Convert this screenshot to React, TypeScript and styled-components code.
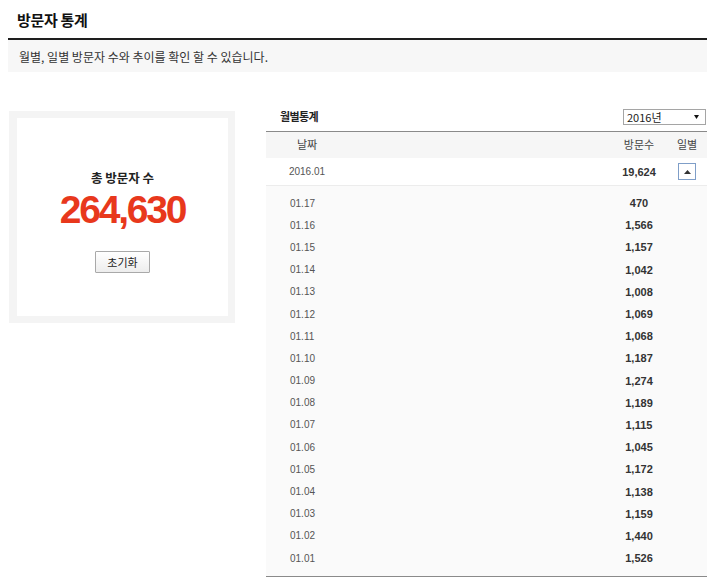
import React from "react";
import styled, { createGlobalStyle } from "styled-components";

const GlobalStyle = createGlobalStyle`
  html, body { margin: 0; padding: 0; background: #fff; }
  body { font-family: "Noto Sans CJK KR", "Noto Sans", sans-serif; color: #222; }
`;

const Page = styled.div`
  width: 699px;
  margin-left: 8px;
`;

const TitleBar = styled.div`
  height: 38px;
  display: flex;
  align-items: center;
  padding-left: 9px;
  border-bottom: 2px solid #1e1e1e;
  box-sizing: content-box;
`;

const Title = styled.h1`
  margin: 0;
  font-size: 15px;
  font-weight: 700;
  color: #111;
  letter-spacing: -0.3px;
`;

const Desc = styled.div`
  height: 32px;
  display: flex;
  align-items: center;
  padding-left: 11px;
  background: #f7f7f7;
  font-size: 12px;
  color: #333;
`;

const Content = styled.div`
  display: flex;
  align-items: flex-start;
  margin-top: 35px;
`;

const TotalCard = styled.div`
  margin-top: 4px;
  margin-left: 1px;
  width: 226px;
  height: 212px;
  box-sizing: border-box;
  padding: 7px 7px 7px 8px;
  background: #f4f4f4;
`;

const TotalInner = styled.div`
  height: 100%;
  background: #fff;
  display: flex;
  flex-direction: column;
  align-items: center;
  padding-top: 51px;
  box-sizing: border-box;
`;

const TotalLabel = styled.div`
  font-size: 12.5px;
  font-weight: 700;
  color: #222;
  line-height: 18px;
`;

const TotalValue = styled.div`
  font-family: "Liberation Sans", Arial, sans-serif;
  font-size: 39px;
  font-weight: 700;
  letter-spacing: -2.2px;
  color: #e8381c;
  line-height: 40px;
  margin-top: 3px;
`;

const ResetButton = styled.button`
  margin-top: 21px;
  width: 55px;
  height: 22px;
  padding: 0;
  border: 1px solid #a9a9a9;
  border-radius: 1px;
  background: linear-gradient(#ffffff, #ededed);
  font-family: "Noto Sans CJK KR", sans-serif;
  font-size: 11px;
  color: #222;
  cursor: pointer;
`;

const StatsPanel = styled.div`
  margin-left: auto;
  width: 441px;
`;

const StatsTop = styled.div`
  height: 24px;
  display: flex;
  align-items: center;
  justify-content: space-between;
  padding: 0 1px 0 14px;
  border-bottom: 1px solid #8a8a8a;
`;

const StatsTitle = styled.div`
  font-size: 11px;
  font-weight: 700;
  letter-spacing: -0.6px;
  color: #222;
  margin-top: -6px;
`;

const YearSelect = styled.div`
  width: 83px;
  height: 16px;
  box-sizing: border-box;
  border: 1px solid #a5a5a5;
  display: flex;
  align-items: center;
  justify-content: space-between;
  padding: 0 6px 0 3px;
  font-size: 11px;
  color: #222;
  margin-top: -5px;
  background: #fff;
`;

const Row = styled.div<{ $h: number; $bg: string; $line?: boolean; $lift?: number }>`
  display: grid;
  grid-template-columns: 82px 1fr 48px 44px;
  align-items: center;
  height: ${(p) => p.$h}px;
  box-sizing: border-box;
  padding-bottom: ${(p) => p.$lift || 0}px;
  background: ${(p) => p.$bg};
  border-bottom: ${(p) => (p.$line ? "1px solid #ececec" : "none")};
`;

const HeadCell = styled.div<{ $shift?: number }>`
  text-align: center;
  font-size: 11px;
  color: #444;
  padding-left: ${(p) => p.$shift || 0}px;
`;

const DateCell = styled.div<{ $left?: boolean }>`
  font-family: "Liberation Sans", Arial, sans-serif;
  font-size: 10px;
  color: #555;
  text-align: ${(p) => (p.$left ? "left" : "center")};
  padding-left: ${(p) => (p.$left ? 24 : 0)}px;
`;

const CountCell = styled.div`
  font-family: "Liberation Sans", Arial, sans-serif;
  font-size: 11px;
  font-weight: 700;
  color: #333;
  text-align: center;
`;

const ToggleCell = styled.div`
  display: flex;
  justify-content: center;
  padding-left: 4px;
`;

const UpButton = styled.button`
  width: 18px;
  height: 17px;
  padding: 0;
  border: 1px solid #7f9ec8;
  background: #fff;
  display: flex;
  align-items: center;
  justify-content: center;
  cursor: pointer;
`;

const DailyList = styled.div`
  background: #fafafa;
  padding: 6px 0 7px;
  border-bottom: 1px solid #8a8a8a;
`;

const DailyRow = styled.div`
  display: grid;
  grid-template-columns: 82px 1fr 48px 44px;
  align-items: center;
  height: 22.2px;
`;

const daily: [string, string][] = [
  ["01.17", "470"],
  ["01.16", "1,566"],
  ["01.15", "1,157"],
  ["01.14", "1,042"],
  ["01.13", "1,008"],
  ["01.12", "1,069"],
  ["01.11", "1,068"],
  ["01.10", "1,187"],
  ["01.09", "1,274"],
  ["01.08", "1,189"],
  ["01.07", "1,115"],
  ["01.06", "1,045"],
  ["01.05", "1,172"],
  ["01.04", "1,138"],
  ["01.03", "1,159"],
  ["01.02", "1,440"],
  ["01.01", "1,526"],
];

export default function App() {
  return (
    <>
      <GlobalStyle />
      <Page>
        <TitleBar>
          <Title>방문자 통계</Title>
        </TitleBar>
        <Desc>월별, 일별 방문자 수와 추이를 확인 할 수 있습니다.</Desc>
        <Content>
          <TotalCard>
            <TotalInner>
              <TotalLabel>총 방문자 수</TotalLabel>
              <TotalValue>264,630</TotalValue>
              <ResetButton>초기화</ResetButton>
            </TotalInner>
          </TotalCard>
          <StatsPanel>
            <StatsTop>
              <StatsTitle>월별통계</StatsTitle>
              <YearSelect>
                <span>2016년</span>
                <svg width="5" height="4" viewBox="0 0 5 4">
                  <path d="M0 0 L5 0 L2.5 4 Z" fill="#111" />
                </svg>
              </YearSelect>
            </StatsTop>
            <Row $h={26} $bg="#f6f6f6" $lift={3}>
              <HeadCell>날짜</HeadCell>
              <div />
              <HeadCell>방문수</HeadCell>
              <HeadCell $shift={4}>일별</HeadCell>
            </Row>
            <Row $h={28} $bg="#fff" $line>
              <DateCell>2016.01</DateCell>
              <div />
              <CountCell>19,624</CountCell>
              <ToggleCell>
                <UpButton aria-label="접기">
                  <svg width="7" height="4" viewBox="0 0 7 4">
                    <path d="M0 4 L3.5 0 L7 4 Z" fill="#333" />
                  </svg>
                </UpButton>
              </ToggleCell>
            </Row>
            <DailyList>
              {daily.map(([d, c]) => (
                <DailyRow key={d}>
                  <DateCell $left>{d}</DateCell>
                  <div />
                  <CountCell>{c}</CountCell>
                  <div />
                </DailyRow>
              ))}
            </DailyList>
          </StatsPanel>
        </Content>
      </Page>
    </>
  );
}
